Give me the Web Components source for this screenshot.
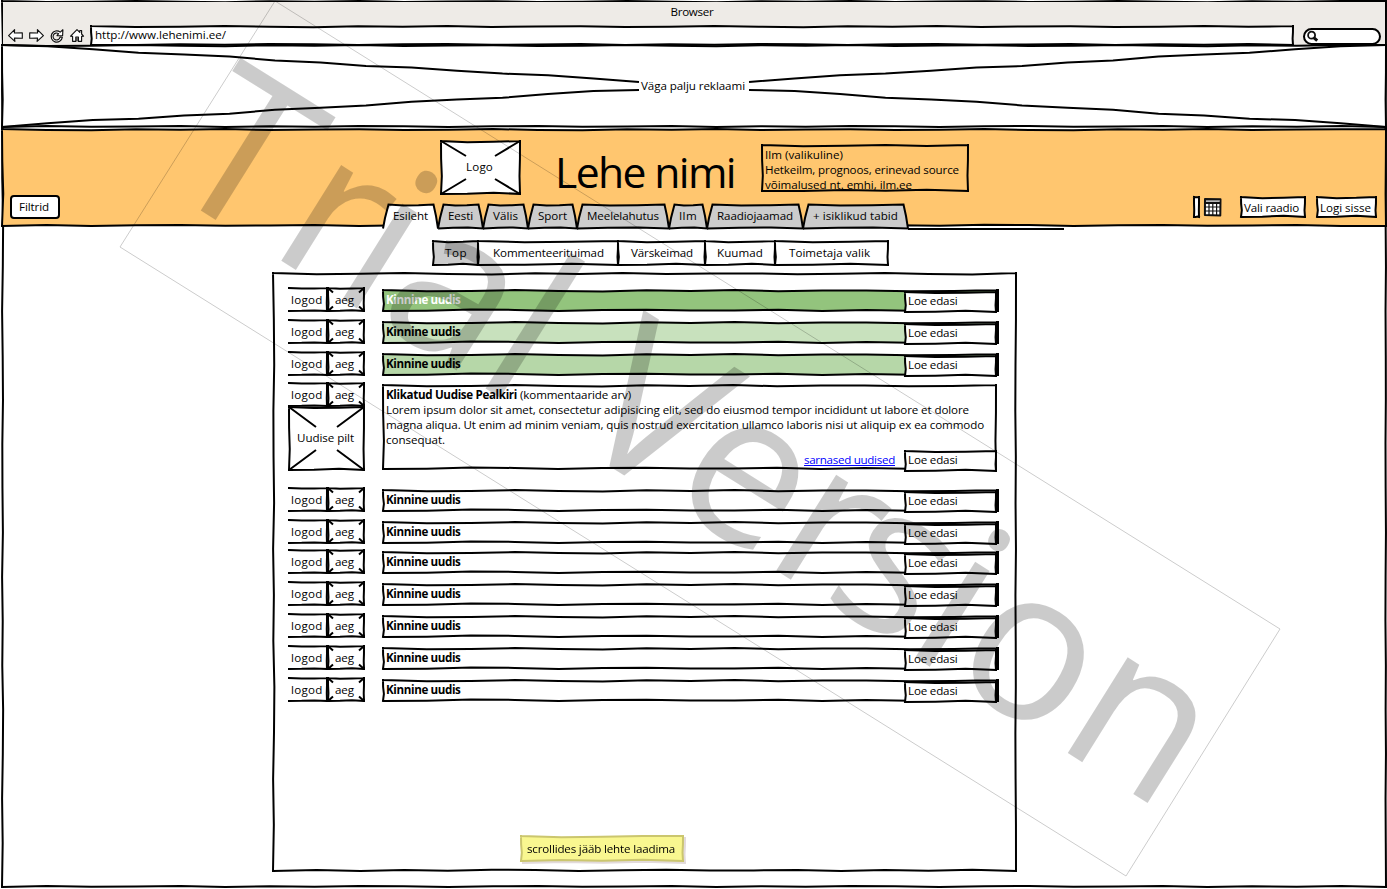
<!DOCTYPE html>
<html lang="et">
<head>
<meta charset="utf-8">
<title>Lehe nimi</title>
<style>
html, body { margin: 0; background: #fff; }
body { width: 1387px; height: 889px; }
</style>
</head>
<body>
<news-page></news-page>
<script>
/* Hand-drawn line: a polyline that drifts sideways from the straight edge. */
const DRIFT = [0.35, 1.1, 0.75, 0.1, 0.9, 1.25, 0.3, 0.8, 0.1, 1.0, 0.5];
function wobble(x1, y1, x2, y2, amp = 1, side = 1, seed = 0) {
  const dx = x2 - x1, dy = y2 - y1, len = Math.hypot(dx, dy) || 1;
  const n = Math.max(3, Math.round(len / 45));
  const nx = -dy / len * side, ny = dx / len * side;
  let out = '';
  for (let i = 1; i <= n; i++) {
    const t = i / n, o = i === n ? 0 : amp * DRIFT[(i + seed) % DRIFT.length];
    out += ` L${(x1 + dx * t + nx * o).toFixed(2)} ${(y1 + dy * t + ny * o).toFixed(2)}`;
  }
  return out;
}

class SkText extends HTMLElement {
  connectedCallback() {
    const root = this.attachShadow({ mode: 'open' });
    root.innerHTML = `<style>
      :host { display: block; flex: none; white-space: nowrap; height: 15px; line-height: 15px; }
      span { display: inline-block; text-decoration: inherit; text-decoration-skip-ink: none; text-underline-offset: 1px; }
    </style><span><slot></slot></span>`;
    const w = +this.getAttribute('w');
    if (!w) return;
    this.style.width = w + 'px';
    const span = root.querySelector('span');
    const n = this.textContent.length;
    const now = span.getBoundingClientRect().width;
    span.style.letterSpacing = ((w - now) / n).toFixed(3) + 'px';
  }
}

class SkBox extends HTMLElement {
  connectedCallback() {
    const a = (k, d) => this.hasAttribute(k) ? this.getAttribute(k) : d;
    const w = +a('w', 10), h = +a('h', 10), amp = +a('amp', 1.1), r = +a('r', 0);
    const sides = a('sides', 'trbl'), stroke = a('stroke', '#000'), seed = +a('seed', 0);
    const s = { t: wobble(0, 0, w, 0, amp, 1, seed), r: wobble(w, 0, w, h, amp * .5, 1, seed + 2),
                b: wobble(w, h, 0, h, amp, 1, seed + 4), l: wobble(0, h, 0, 0, amp, 1, seed + 1) };
    const from = { t: [0, 0], r: [w, 0], b: [w, h], l: [0, h] };
    let shape;
    if (r) {
      shape = `<rect width="${w}" height="${h}" rx="${r}" fill="${a('fill', '#fff')}" stroke="${stroke}" stroke-width="2"/>`;
    } else {
      let line = '';
      for (const k of sides) line += `M${from[k]}${s[k]} `;
      shape = `<path d="M0 0${s.t}${s.r}${s.b}${s.l}Z" fill="${a('fill', '#fff')}"/>` +
        `<path d="${line}" fill="none" stroke="${stroke}" stroke-width="${a('sw', 2)}" stroke-linecap="square"/>`;
    }
    if (this.hasAttribute('cross')) {
      const [cx, cy] = a('cross').split(',').map(Number);
      const seg = [[0, 0, cx, cy], [w, 0, w - cx, cy], [0, h, cx, h - cy], [w, h, w - cx, h - cy]];
      shape += `<path fill="none" stroke="#000" stroke-width="2" d="${seg.map(p => `M${p[0]} ${p[1]}` +
        (cx > 100 ? wobble(...p, 1.3, p[0] ? 1 : -1, p[1] ? 3 : 0) : `L${p[2]} ${p[3]}`)).join(' ')}"/>`;
    }
    this.style.width = w + 'px';
    this.style.height = h + 'px';
    this.attachShadow({ mode: 'open' }).innerHTML = `<style>
      :host { display: block; position: relative; flex: none; }
      svg { position: absolute; left: 0; top: 0; overflow: visible; }
      div { position: relative; display: flex; flex-direction: ${a('dir', 'row')}; align-items: ${a('align', 'center')};
        justify-content: ${a('justify', 'flex-start')}; width: 100%; height: 100%; box-sizing: border-box; padding: ${a('pad', '0')}; }
    </style><svg width="${w}" height="${h}">${shape}</svg><div><slot></slot></div>`;
  }
}

class SkTab extends HTMLElement {
  connectedCallback() {
    const w = +this.getAttribute('w'), on = this.hasAttribute('active');
    this.attachShadow({ mode: 'open' }).innerHTML = `<style>
      :host { display: block; position: relative; flex: none; width: ${w}px; height: 24px; }
      svg { position: absolute; left: 0; top: 0; overflow: visible; }
      div { position: relative; padding: 4px 0 0 10px; color: #000; }
    </style><svg width="${w}" height="24">
      <path d="M0 24.5 L2 14 L5.5 0.5${wobble(5.5, .5, w - 4.5, .5, .9)} L${w - 2} 12 L${w} 24.5Z" fill="${on ? '#fff' : '#ccc'}"/>
      <path d="M0 24.5 L2 14 L5.5 0.5${wobble(5.5, .5, w - 4.5, .5, .9)} L${w - 2} 12 L${w} 24.5${on ? '' : wobble(w, 24.5, 0, 24.5, .9)}" fill="none" stroke="#000" stroke-width="2"/>
    </svg><div><slot></slot></div>`;
  }
}

class SkIcon extends HTMLElement {
  connectedCallback() {
    const set = {
      back: [15, 13, '<path d="M0.6 6.6 L6.6 0.7 L6.4 4 L14.3 3.8 L14.3 9.3 L6.4 9 L6.9 12.4Z" fill="#fff"/>'],
      forward: [15, 13, '<path d="M14.4 6.6 L8.4 0.7 L8.6 4 L0.7 3.8 L0.7 9.3 L8.6 9 L8.1 12.4Z" fill="#fff"/>'],
      reload: [14, 13, '<path d="M10.2 3.1 A5.6 5.6 0 1 0 12.3 8.4 L10 8 A3.5 3.5 0 1 1 8.6 4.7 L7 6.6 L12.6 6.7 L12.9 0.7Z" fill="#fff"/>'],
      home: [14, 13, '<path d="M0.6 7.2 L7 0.7 L9.8 3.4 V1.5 H11.6 V5 L13.5 7.2 L11.6 7.4 V12.3 H8.4 V8 H5.8 V12.3 H2.6 V7.4Z" fill="#fff"/><path d="M7 8.4V12.3"/>'],
      search: [12, 12, '<circle cx="4.6" cy="4.2" r="3.5" stroke-width="1.8" fill="#fff"/><path d="M6.8 6.6 L10.2 9.6" stroke-width="3"/>'],
      calendar: [17, 18, '<path d="M1 1 L16.5 1.3 L16.3 17.4 L0.9 17Z" fill="#fff" stroke-width="2"/><path d="M2 2.8H15.5" stroke="#888" stroke-width="1.6"/><path d="M1 5H16.5" stroke-width="2"/><path d="M1 9H16M1 13H16M5 5V17M8.8 5V17M12.6 5V17" stroke-width="1.2"/>']
    };
    const [w, h, art] = set[this.getAttribute('name')];
    this.attachShadow({ mode: 'open' }).innerHTML = `<style>:host { display: block; flex: none; width: ${w}px; height: ${h}px; } svg { display: block; overflow: visible; }</style>
      <svg width="${w}" height="${h}" fill="none" stroke="#111" stroke-width="1.15" stroke-linejoin="round">${art}</svg>`;
  }
}

class NewsMeta extends HTMLElement {
  connectedCallback() {
    this.attachShadow({ mode: 'open' }).innerHTML = `<style>
      :host { display: flex; flex: none; width: 76px; height: 23px; }
      .aeg { margin-left: 1px; }
      .logod { margin-left: 1px; }
    </style>
    <sk-box class="logod" w="38" h="23" sides="trb" amp=".5" pad="0 0 1px 2px"><sk-text w="31.5">logod</sk-text></sk-box>
    <sk-box class="aeg" w="36" h="23" amp=".6" cross="5,4.5" pad="0 0 1px 7px"><sk-text w="19">aeg</sk-text></sk-box>`;
  }
}

class NewsRow extends HTMLElement {
  connectedCallback() {
    const fill = this.getAttribute('fill') || '#fff';
    this.attachShadow({ mode: 'open' }).innerHTML = `<style>
      :host { display: flex; align-items: flex-start; height: 23px; color: #000; }
      .bar { margin: 2px 0 0 19px; }
      .t { font-weight: 700; color: ${this.getAttribute('ink') || '#000'}; margin-bottom: 2px; }
      .more { margin: 2px 0 0 auto; }
      .edge { width: 3px; margin-right: -1px; height: 23px; background: #000; }
    </style>
    <news-meta></news-meta>
    <sk-box class="bar" w="615" h="21" fill="${fill}" amp="1.2" pad="0 0 0 3px">
      <sk-text class="t" w="74.5">${this.textContent}</sk-text>
      <sk-box class="more" w="91" h="20" amp="1" pad="0 0 3px 3px"><sk-text w="49.5">Loe edasi</sk-text></sk-box>
      <div class="edge"></div>
    </sk-box>`;
  }
}

class NewsOpen extends HTMLElement {
  connectedCallback() {
    this.attachShadow({ mode: 'open' }).innerHTML = `<style>
      :host { display: flex; align-items: flex-start; height: 88px; }
      .pic { margin: 1px 0 0 1px; }
      .body { margin: 2px 0 0 19px; }
      .line { display: flex; gap: 3px; }
      b { font-weight: 700; }
      .foot { display: flex; flex: none; align-items: center; height: 20px; padding: 4px 0 0 418px; gap: 10px; }
      .link { color: #00f; text-decoration: underline; margin-bottom: 3px; }
    </style>
    <div><news-meta></news-meta>
      <sk-box class="pic" w="75" h="63" amp="1" cross="27,20" justify="center" pad="0 2px 2px 0"><sk-text w="57">Uudise pilt</sk-text></sk-box></div>
    <sk-box class="body" w="613" h="84" amp="1.2" dir="column" align="flex-start" pad="2px 0 0 3px">
      <div class="line"><b><sk-text w="131">Klikatud Uudise Pealkiri</sk-text></b><sk-text w="111">(kommentaaride arv)</sk-text></div>
      <sk-text w="583">Lorem ipsum dolor sit amet, consectetur adipisicing elit, sed do eiusmod tempor incididunt ut labore et dolore</sk-text>
      <sk-text w="598">magna aliqua. Ut enim ad minim veniam, quis nostrud exercitation ullamco laboris nisi ut aliquip ex ea commodo</sk-text>
      <sk-text w="59">consequat.</sk-text>
      <div class="foot"><sk-text class="link" w="91">sarnased uudised</sk-text>
        <sk-box w="91" h="20" amp="1" pad="0 0 3px 3px"><sk-text w="49.5">Loe edasi</sk-text></sk-box></div>
    </sk-box>`;
  }
}

class SiteBanner extends HTMLElement {
  connectedCallback() {
    const tabs = [['Esileht', 55, 35], ['Eesti', 45, 25], ['Välis', 45, 25], ['Sport', 49, 29], ['Meelelahutus', 92, 72],
      ['Ilm', 38, 18], ['Raadiojaamad', 96, 76], ['+ isiklikud tabid', 105, 85]];
    this.attachShadow({ mode: 'open' }).innerHTML = `<style>
      :host { display: block; margin-top: 2px; height: 98px; }
      .row { display: flex; align-items: flex-start; width: 1384px; height: 98px; }
      .left { width: 372px; padding: 67px 0 0 9px; height: 31px; flex: none; }
      .mid { width: 683px; flex: none; }
      .top { display: flex; align-items: flex-start; height: 75px; padding-left: 58px; }
      .logo { margin-top: 12px; }
      .name { margin: 15px 0 0 35px; font-size: 42.7px; }
      .name sk-text { height: 56px; line-height: 56px; }
      .weather { margin: 16px 0 0 27px; }
      .tabs { display: flex; }
      .rest { flex: none; width: 156px; height: 2px; background: #000; margin-top: 23.5px; }
      .right { display: flex; padding: 68px 0 0 128px; align-items: flex-start; }
      .cal { margin: 1px 0 0 5px; }
      .r1 { margin-left: 20px; } .r2 { margin-left: 12px; }
    </style>
    <sk-box w="1384" h="97" fill="#ffc66f" amp="1" seed="3" align="flex-start"><div class="row">
      <div class="left"><sk-box w="48" h="22" r="3" pad="0 0 1px 8px"><sk-text w="30">Filtrid</sk-text></sk-box></div>
      <div class="mid">
        <div class="top">
          <sk-box class="logo" w="79" h="53" cross="25,15" justify="center" pad="0 2px 2px 0"><sk-text w="27">Logo</sk-text></sk-box>
          <div class="name"><sk-text w="180">Lehe nimi</sk-text></div>
          <sk-box class="weather" w="206" h="46" fill="#ffc66f" dir="column" align="flex-start" pad="2px 0 0 3px">
            <sk-text w="78">Ilm (valikuline)</sk-text><sk-text w="194">Hetkeilm, prognoos, erinevad source</sk-text><sk-text w="147">võimalused nt. emhi, ilm.ee</sk-text></sk-box>
        </div>
        <div class="tabs">${tabs.map((t, i) => `<sk-tab w="${t[1]}"${i ? '' : ' active'}><sk-text w="${t[2]}">${t[0]}</sk-text></sk-tab>`).join('')}<div class="rest"></div></div>
      </div>
      <div class="right">
        <sk-box w="5" h="20" amp=".3"></sk-box><sk-icon class="cal" name="calendar"></sk-icon>
        <sk-box class="r1" w="64" h="20" pad="0 0 0 3px"><sk-text w="55">Vali raadio</sk-text></sk-box>
        <sk-box class="r2" w="59" h="20" pad="0 0 0 3px"><sk-text w="51">Logi sisse</sk-text></sk-box>
      </div>
    </div></sk-box>`;
  }
}

class TrialMark extends HTMLElement {
  connectedCallback() {
    this.attachShadow({ mode: 'open' }).innerHTML = `<style>
      :host { position: absolute; left: 0; top: 0; width: 1387px; height: 889px; pointer-events: none; }
      svg { overflow: visible; }
      text { font-family: "Open Sans", "Noto Sans", sans-serif; font-size: 211px; }
    </style><svg width="1387" height="889" opacity=".2">
      <path d="M275 1 L1280 629 L1126 876 L120 247Z" fill="none" stroke="#000" stroke-width="1"/>
      <g transform="translate(275 1) rotate(32.03)"><text y="217" x="-1 125 197.5 250 366 425 476 594 709 777 873 925.5 1053">Trial Version</text></g>
    </svg>`;
  }
}

class NewsPage extends HTMLElement {
  connectedCallback() {
    const subs = [['Top', 45, 12, 22], ['Kommenteerituimad', 140, 15, 111], ['Värskeimad', 87, 13, 62], ['Kuumad', 70, 12, 46], ['Toimetaja valik', 113, 14, 81]];
    const first = [['#93c47d', '#fff'], ['#c8e1bd', '#000'], ['#b6d7a8', '#000']];
    const row = (f, i, gap) => `<news-row style="margin-top:${gap}px" fill="${f}" ink="${i}">Kinnine uudis</news-row>`;
    this.attachShadow({ mode: 'open' }).innerHTML = `<style>
      :host { display: block; position: relative; width: 1387px; height: 889px; font: 11.6px "Open Sans", "Noto Sans", sans-serif; color: #000; }
      .frame { margin: 0 0 0 2px; top: 1px; }
      .inner { display: flex; flex-direction: column; width: 1384px; }
      .chrome { height: 44px; display: flex; flex-direction: column; background: #eeebe7; margin: 1px 1px -1px; width: 1382px; }
      .title { display: flex; justify-content: center; padding: 2px 4px 0 0; height: 22px; }
      .bar { display: flex; align-items: flex-start; padding-left: 5px; }
      sk-icon { margin: 3px 6px 0 0; }
      .address { margin-left: 1px; }
      .find { margin: 3px 0 0 11px; }
      .find sk-icon { margin: 0; }
      .subs { display: flex; margin: 14px 0 0 431px; }
      .panel { margin: 8px 0 0 271px; }
      .list { width: 743px; padding: 15px 0 0 15px; box-sizing: border-box; display: flex; flex-direction: column; }
      .note { margin: 135px 0 0 233px; filter: drop-shadow(2px 2px 0 #e2dadb); }
    </style>
    <sk-box class="frame" w="1384" h="886" amp=".9" align="flex-start"><div class="inner">
      <div class="chrome">
        <div class="title"><sk-text w="43">Browser</sk-text></div>
        <div class="bar">
          <sk-icon name="back"></sk-icon><sk-icon name="forward"></sk-icon><sk-icon name="reload"></sk-icon><sk-icon name="home"></sk-icon>
          <sk-box class="address" w="1202" h="19" amp=".9" pad="0 0 2px 4px"><sk-text w="131">http://www.lehenimi.ee/</sk-text></sk-box>
          <sk-box class="find" w="76" h="15" r="7.5" pad="1px 0 0 3px"><sk-icon name="search"></sk-icon></sk-box>
        </div>
      </div>
      <sk-box w="1384" h="82" cross="637,37" justify="center" amp=".9" pad="0 2px 2px 0"><sk-text w="104">Väga palju reklaami</sk-text></sk-box>
      <site-banner></site-banner>
      <div class="subs">${subs.map((s, i) => `<sk-box w="${s[1]}" h="24" fill="${i ? '#fff' : '#ccc'}" pad="0 0 1px ${s[2]}px"><sk-text w="${s[3]}">${s[0]}</sk-text></sk-box>`).join('')}</div>
      <sk-box class="panel" w="743" h="598" align="flex-start"><div class="list">
        ${first.map((f, i) => row(f[0], f[1], i ? 9 : 0)).join('')}
        <news-open style="margin-top:8px"></news-open>
        ${[17, 9, 7, 9, 9, 9, 9].map(g => row('#fff', '#000', g)).join('')}
        <sk-box class="note" w="162" h="25" fill="#f9f790" stroke="#cbc66e" pad="0 0 0 6px"><sk-text w="148">scrollides jääb lehte laadima</sk-text></sk-box>
      </div></sk-box>
    </div></sk-box>
    <trial-mark></trial-mark>`;
  }
}

customElements.define('news-page', NewsPage);
customElements.define('site-banner', SiteBanner);
customElements.define('news-row', NewsRow);
customElements.define('news-open', NewsOpen);
customElements.define('news-meta', NewsMeta);
customElements.define('sk-box', SkBox);
customElements.define('sk-tab', SkTab);
customElements.define('sk-icon', SkIcon);
customElements.define('trial-mark', TrialMark);
customElements.define('sk-text', SkText);
</script>
</body>
</html>
